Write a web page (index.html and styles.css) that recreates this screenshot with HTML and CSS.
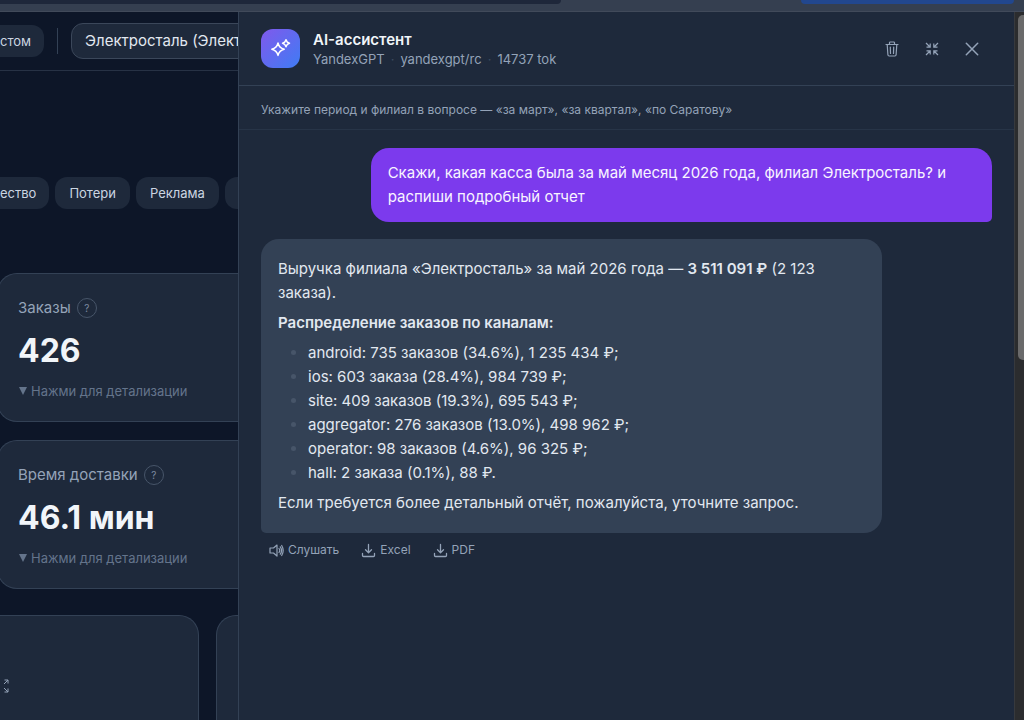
FILE: index.html
```html
<!DOCTYPE html>
<html lang="ru">
<head>
<meta charset="utf-8">
<title>AI-ассистент</title>
<link rel="stylesheet" href="styles.css">
</head>
<body>
<div class="chrome"><div class="chrome-address"></div><div class="chrome-action"></div></div>
<div class="layout">
  <main class="dashboard">
    <div class="toolbar">
      <button class="chip chip-cut">стом</button>
      <span class="divider"></span>
      <button class="branch">Электросталь (Элект</button>
    </div>
    <nav class="tabs">
      <button class="chip chip-cut">ество</button>
      <button class="chip">Потери</button>
      <button class="chip">Реклама</button>
      <button class="chip" aria-label="Ещё"></button>
    </nav>
    <section class="metrics">
      <article class="card">
        <h2 class="card-title">Заказы <button class="help">?</button></h2>
        <p class="value">426</p>
        <p class="more"><svg width="10" height="10" viewBox="0 0 10 10"><path d="M1 1h8L5 9z" fill="currentColor"/></svg>Нажми для детализации</p>
      </article>
      <article class="card">
        <h2 class="card-title">Время доставки <button class="help">?</button></h2>
        <p class="value">46.1 мин</p>
        <p class="more"><svg width="10" height="10" viewBox="0 0 10 10"><path d="M1 1h8L5 9z" fill="currentColor"/></svg>Нажми для детализации</p>
      </article>
    </section>
    <section class="charts">
      <article class="chart chart-main">
        <button class="expand" aria-label="Развернуть"><svg width="16" height="16" viewBox="0 0 16 16" fill="none" stroke="currentColor"><path d="M10.500 2H14v3.500M14 2l-4 4M10.500 14H14v-3.500M14 14l-4-4M5.500 2H2v3.500M2 2l4 4M5.500 14H2v-3.500M2 14l4-4"/></svg></button>
      </article>
      <article class="chart chart-side"></article>
    </section>
  </main>
  <aside class="panel">
    <header class="panel-head">
      <span class="logo"><svg width="22" height="22" viewBox="0 0 22 22" fill="none" stroke="#fff" stroke-width="1.500" stroke-linejoin="round"><path d="M8 5Q9.200 10 14.200 11.200Q9.200 12.400 8 17.400Q6.800 12.400 1.800 11.200Q6.800 10 8 5z"/><path d="M16 1.700Q16.700 4.500 19.500 5.200Q16.700 5.900 16 8.700Q15.300 5.900 12.500 5.200Q15.300 4.500 16 1.700z"/></svg></span>
      <div class="heading">
        <h1 class="title">AI-ассистент</h1>
        <p class="meta"><span>YandexGPT</span><span class="dot">·</span><span>yandexgpt/rc</span><span class="dot">·</span><span>14737 tok</span></p>
      </div>
      <div class="tools">
        <button class="tool" aria-label="Очистить"><svg width="16" height="16" viewBox="0 0 16 16" fill="none" stroke="currentColor" stroke-width="1.200" stroke-linecap="round" stroke-linejoin="round"><path d="M2 3.500h12M5.500 3.500V1.800q0-.8.8-.8h3.400q.8 0 .8.800v1.700M3.200 3.500l.7 10.300q.1 1.200 1.200 1.200h5.800q1.100 0 1.200-1.200l.7-10.300M6.300 6l.2 6.500M9.700 6l-.2 6.500"/></svg></button>
        <button class="tool" aria-label="Свернуть"><svg width="16" height="16" viewBox="0 0 16 16" fill="none" stroke="currentColor" stroke-width="1.200"><path d="M2 2l4 4M2.500 6.200h3.700V2.500M14 2l-4 4M9.800 2.500v3.700h3.700M2 14l4-4M2.500 9.800h3.700v3.700M14 14l-4-4M9.800 13.500V9.800h3.700"/></svg></button>
        <button class="tool" aria-label="Закрыть"><svg width="16" height="16" viewBox="0 0 16 16" fill="none" stroke="currentColor" stroke-width="1.500" stroke-linecap="round"><path d="M2.300 2.300l11.400 11.400M13.700 2.300L2.300 13.700"/></svg></button>
      </div>
    </header>
    <p class="hint">Укажите период и филиал в вопросе — «за март», «за квартал», «по Саратову»</p>
    <div class="messages">
      <div class="bubble bubble-user">Скажи, какая касса была за май месяц 2026 года, филиал Электросталь? и распиши подробный отчет</div>
      <div class="bubble bubble-bot">
        <p>Выручка филиала «Электросталь» за май 2026 года — <strong>3 511 091 ₽</strong> (2 123 заказа).</p>
        <p><strong>Распределение заказов по каналам:</strong></p>
        <ul class="channels">
          <li>android: 735 заказов (34.6%), 1 235 434 ₽;</li>
          <li>ios: 603 заказа (28.4%), 984 739 ₽;</li>
          <li>site: 409 заказов (19.3%), 695 543 ₽;</li>
          <li>aggregator: 276 заказов (13.0%), 498 962 ₽;</li>
          <li>operator: 98 заказов (4.6%), 96 325 ₽;</li>
          <li>hall: 2 заказа (0.1%), 88 ₽.</li>
        </ul>
        <p>Если требуется более детальный отчёт, пожалуйста, уточните запрос.</p>
      </div>
      <div class="actions">
        <button class="action"><svg width="15" height="15" viewBox="0 0 15 15" fill="none" stroke="currentColor" stroke-width="1.200" stroke-linecap="round" stroke-linejoin="round"><path d="M8 2L4.500 5H1v5h3.500L8 13zM10 5.500q1.500 2 0 4M11.300 3.800q2.500 3.700 0 7.400M12.700 2.500q3 5 0 10"/></svg>Слушать</button>
        <button class="action"><svg width="15" height="15" viewBox="0 0 15 15" fill="none" stroke="currentColor" stroke-width="1.300" stroke-linecap="round" stroke-linejoin="round"><path d="M7.500 1.500v8M4.500 6.800l3 3 3-3M1.500 10.500v2q0 1 1 1h10q1 0 1-1v-2"/></svg>Excel</button>
        <button class="action"><svg width="15" height="15" viewBox="0 0 15 15" fill="none" stroke="currentColor" stroke-width="1.300" stroke-linecap="round" stroke-linejoin="round"><path d="M7.500 1.500v8M4.500 6.800l3 3 3-3M1.500 10.500v2q0 1 1 1h10q1 0 1-1v-2"/></svg>PDF</button>
      </div>
    </div>
  </aside>
  <div class="scrollbar"><div class="thumb"></div></div>
</div>
</body>
</html>
```

FILE: styles.css
```css
* { box-sizing: border-box; margin: 0; }
body {
  height: 100vh;
  display: flex;
  flex-direction: column;
  overflow: hidden;
  background: #0d1628;
  color: #e2e8f0;
  font-family: Inter, "Noto Sans", sans-serif;
  font-size: 15px;
  line-height: 24px;
}
button {
  border: 0;
  padding: 0;
  background: none;
  color: inherit;
  font: inherit;
  white-space: nowrap;
}
svg { display: block; flex: none; }

.chrome {
  flex: none;
  height: 12px;
  display: grid;
  grid-template-columns: 561fr 240fr 213fr 10px;
  background: #353f50;
  border-bottom: 1px solid #414a5a;
}
.chrome-address { height: 4px; background: #1e273a; border-radius: 0 0 8px 0; }
.chrome-action { grid-column: 3; height: 4px; background: #22478e; border-radius: 0 0 6px 6px; }

.layout {
  flex: 1;
  min-height: 0;
  display: grid;
  grid-template-columns: minmax(0, 238fr) minmax(0, 776fr) 10px;
}

.dashboard { overflow: hidden; }
.toolbar {
  display: flex;
  align-items: center;
  height: 59px;
  border-bottom: 1px solid #273245;
}
.chip {
  flex: none;
  height: 32px;
  min-width: 48px;
  padding: 0 14px;
  border-radius: 12px;
  background: #1e293b;
  color: #cbd5e1;
  font-size: 13px;
}
.chip-cut { min-width: 0; padding: 0 13px 0 0; border-radius: 0 12px 12px 0; }
.divider { flex: none; width: 1px; height: 26px; margin: 0 13px; background: #334155; }
.branch {
  flex: none;
  height: 36px;
  padding: 0 13px;
  border: 1px solid #3b475a;
  border-radius: 12px;
  background: #1e293b;
  color: #e2e8f0;
}
.tabs { display: flex; gap: 6px; margin-top: 106px; }

.metrics { display: grid; gap: 18px; margin: 64px 0 0 -3px; }
.card {
  height: 149px;
  padding: 22px 20px;
  border: 1px solid #334155;
  border-right: 0;
  border-radius: 20px 0 0 20px;
  background: #1e293b;
}
.card-title {
  display: flex;
  align-items: center;
  gap: 6px;
  color: #94a3b8;
  font-size: 15px;
  font-weight: 400;
}
.help {
  width: 20px;
  height: 20px;
  border: 1px solid #475569;
  border-radius: 50%;
  color: #7c8aa0;
  font-size: 10px;
  line-height: 18px;
}
.value {
  margin-top: 11px;
  color: #f1f5f9;
  font-size: 32px;
  font-weight: 700;
  line-height: 40px;
}
.more {
  display: flex;
  align-items: center;
  gap: 3px;
  margin-top: 8px;
  color: #64748b;
  font-size: 13px;
}

.charts { display: flex; gap: 17px; margin-top: 26px; }
.chart { height: 260px; border: 1px solid #334155; background: #1e293b; }
.chart-main { flex: 199; padding-top: 62px; border-left: 0; border-radius: 0 20px 0 0; }
.chart-side { flex: 21; border-right: 0; border-radius: 20px 0 0 0; }
.expand { display: block; margin-left: -6px; color: #94a3b8; }

.panel {
  min-width: 0;
  overflow: hidden;
  border-left: 1px solid #334155;
  background: #1e293b;
}
.panel-head {
  display: flex;
  align-items: center;
  gap: 13px;
  height: 74px;
  padding: 0 22px;
  border-bottom: 1px solid #334155;
}
.logo {
  display: grid;
  place-items: center;
  width: 39px;
  height: 39px;
  border-radius: 12px;
  background: linear-gradient(135deg, #8059ec, #3f7cf4);
}
.heading { flex: 1; }
.title { color: #f1f5f9; font-size: 15px; font-weight: 600; line-height: 20px; }
.meta { display: flex; gap: 6px; color: #94a3b8; font-size: 13px; line-height: 18px; }
.dot { color: #3d4b60; }
.tools { display: flex; }
.tool { display: grid; place-items: center; width: 40px; height: 36px; color: #94a3b8; }
.hint {
  height: 44px;
  padding: 12px 22px;
  border-bottom: 1px solid #273447;
  color: #94a3b8;
  font-size: 12px;
  line-height: 24px;
}
.messages { display: flex; flex-direction: column; padding: 18px 22px; }
.bubble { width: 85%; border-radius: 18px; }
.bubble-user {
  align-self: flex-end;
  padding: 13px 17px;
  border-bottom-right-radius: 5px;
  background: #7c3aed;
  color: #f8f4ff;
}
.bubble-bot {
  display: grid;
  gap: 6px;
  margin-top: 17px;
  padding: 18px 17px;
  border-bottom-left-radius: 5px;
  background: #334155;
}
.bubble strong { font-weight: 600; }
.channels { padding-left: 30px; }
.channels li::marker { color: #475569; }
.actions { display: flex; gap: 22px; padding: 5px 8px; }
.action { display: flex; align-items: center; gap: 4px; color: #94a3b8; font-size: 12px; }

.scrollbar { padding: 3px 0 0 3px; background: #2b2c2e; border-left: 1px solid #37393d; }
.thumb { height: 49%; border-radius: 5px 0 0 5px; background: #6a6a6b; }
```
